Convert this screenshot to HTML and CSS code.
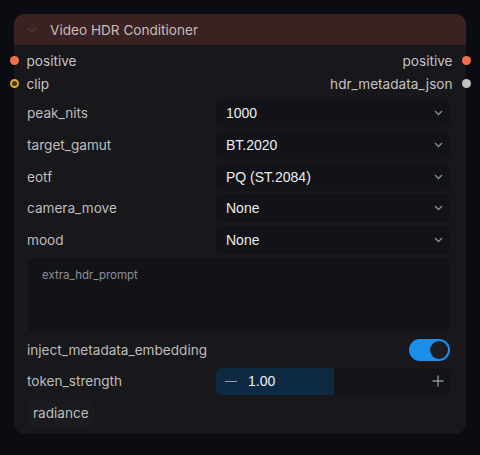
FILE: index.html
```html
<!DOCTYPE html>
<html>
<head>
<meta charset="utf-8">
<link rel="stylesheet" href="styles.css">
</head>
<body>
<div class="node">
  <div class="header">
    <svg class="collapse" width="10" height="6" viewBox="0 0 10 6"><path d="M1 1 L5 5 L9 1" fill="none" stroke="#573634" stroke-width="1.6"/></svg>
    <span class="title">Video HDR Conditioner</span>
  </div>
  <div class="slots">
    <div class="slot-row">
      <div class="slot in"><span class="dot orange"></span><span>positive</span></div>
      <div class="slot out"><span>positive</span><span class="dot orange"></span></div>
    </div>
    <div class="slot-row">
      <div class="slot in"><span class="dot ring"></span><span>clip</span></div>
      <div class="slot out"><span>hdr_metadata_json</span><span class="dot gray"></span></div>
    </div>
  </div>
  <div class="widgets">
    <div class="wrow"><span class="label">peak_nits</span><div class="combo"><span>1000</span><svg class="chev" width="9" height="6" viewBox="0 0 9 6"><path d="M1 1 L4.5 4.5 L8 1" fill="none" stroke="#8a8f98" stroke-width="1.3"/></svg></div></div>
    <div class="wrow"><span class="label">target_gamut</span><div class="combo"><span>BT.2020</span><svg class="chev" width="9" height="6" viewBox="0 0 9 6"><path d="M1 1 L4.5 4.5 L8 1" fill="none" stroke="#8a8f98" stroke-width="1.3"/></svg></div></div>
    <div class="wrow"><span class="label">eotf</span><div class="combo"><span>PQ (ST.2084)</span><svg class="chev" width="9" height="6" viewBox="0 0 9 6"><path d="M1 1 L4.5 4.5 L8 1" fill="none" stroke="#8a8f98" stroke-width="1.3"/></svg></div></div>
    <div class="wrow"><span class="label">camera_move</span><div class="combo"><span>None</span><svg class="chev" width="9" height="6" viewBox="0 0 9 6"><path d="M1 1 L4.5 4.5 L8 1" fill="none" stroke="#8a8f98" stroke-width="1.3"/></svg></div></div>
    <div class="wrow"><span class="label">mood</span><div class="combo"><span>None</span><svg class="chev" width="9" height="6" viewBox="0 0 9 6"><path d="M1 1 L4.5 4.5 L8 1" fill="none" stroke="#8a8f98" stroke-width="1.3"/></svg></div></div>
    <div class="textarea">extra_hdr_prompt</div>
    <div class="wrow"><span class="label">inject_metadata_embedding</span><div class="toggle"><span class="knob"></span></div></div>
    <div class="wrow"><span class="label">token_strength</span>
      <div class="number">
        <div class="fill" style="width:50.4%"></div>
        <span class="minus"></span>
        <span class="num">1.00</span>
        <svg class="plus" width="12" height="12" viewBox="0 0 12 12"><path d="M6 0.5 V11.5 M0.5 6 H11.5" stroke="#8a8f98" stroke-width="1.4"/></svg>
      </div>
    </div>
    <div class="wrow"><span class="chip">radiance</span></div>
  </div>
</div>
</body>
</html>
```

FILE: styles.css
```css
html, body {
  margin: 0;
  padding: 0;
  background: #0b0c11;
  width: 480px;
  height: 455px;
  overflow: hidden;
}
body {
  font-family: Inter, "Noto Sans", sans-serif;
  font-size: 13.6px;
  padding: 14px 0 0 14px;
  box-sizing: border-box;
}
.node {
  position: relative;
  width: 452px;
  height: 420px;
  background: #18171b;
  border-radius: 11px;
  display: flex;
  flex-direction: column;
}
.header {
  height: 31px;
  background: #3a2222;
  border-radius: 11px 11px 0 0;
  display: flex;
  align-items: center;
  padding-left: 13px;
}
.collapse {
  margin-right: 13px;
}
.title {
  color: #c7bdb9;
  font-size: 13.6px;
}
.slots {
  padding-top: 4px;
  display: flex;
  flex-direction: column;
}
.slot-row {
  height: 23px;
  display: flex;
  justify-content: space-between;
  align-items: center;
}
.slot {
  display: flex;
  align-items: center;
  color: #c4c4c4;
}
.slot.in .dot { margin-left: -4.5px; margin-right: 8px; }
.slot.out .dot { margin-right: -4.5px; margin-left: 9px; }
.dot {
  width: 9px;
  height: 9px;
  border-radius: 50%;
  box-sizing: border-box;
  display: inline-block;
}
.dot.orange { background: #f1704a; }
.dot.gray { background: #c2c2c2; }
.dot.ring { background: #4a3410; border: 2.5px solid #e3a53a; }
.widgets {
  padding: 4px 16px 0 13px;
  display: flex;
  flex-direction: column;
  gap: 3.75px;
}
.wrow {
  height: 28px;
  display: flex;
  align-items: center;
  justify-content: space-between;
}
.label {
  color: #bdbdbd;
}
.combo {
  width: 234px;
  height: 28px;
  background: #111318;
  border-radius: 6px;
  display: flex;
  align-items: center;
  justify-content: space-between;
  padding: 0 7px 0 10px;
  box-sizing: border-box;
  color: #ececec;
  font-family: "Liberation Sans", Arial, sans-serif;
  font-size: 14px;
}
.textarea {
  height: 74px;
  background: #111318;
  border-radius: 6px;
  margin-left: 1px;
  padding: 10px 14px;
  box-sizing: border-box;
  color: #8d8f94;
  font-size: 11.5px;
}
.toggle {
  width: 41px;
  height: 22px;
  border-radius: 11px;
  background: #1890ea;
  display: flex;
  align-items: center;
  justify-content: flex-end;
  padding-right: 2px;
  box-sizing: border-box;
}
.knob {
  width: 18px;
  height: 18px;
  border-radius: 50%;
  background: #1c1c21;
}
.number {
  position: relative;
  width: 234px;
  height: 27px;
  background: #121418;
  border-radius: 6px;
  display: flex;
  align-items: center;
  padding: 0 6px 0 9px;
  box-sizing: border-box;
  overflow: hidden;
}
.fill {
  position: absolute;
  left: 0;
  top: 0;
  bottom: 0;
  background: #0e2a43;
}
.minus {
  position: relative;
  width: 12px;
  height: 1.5px;
  background: #9aa3ad;
  margin-right: 11px;
}
.num {
  position: relative;
  color: #eef2f6;
  font-family: "Liberation Sans", Arial, sans-serif;
  font-size: 14px;
  flex: 1;
}
.plus {
  position: relative;
}
.chip {
  color: #bdbdbd;
  background: #1b1a1f;
  border-radius: 6px;
  padding: 5px 5px;
  margin-left: 1px;
}
```
